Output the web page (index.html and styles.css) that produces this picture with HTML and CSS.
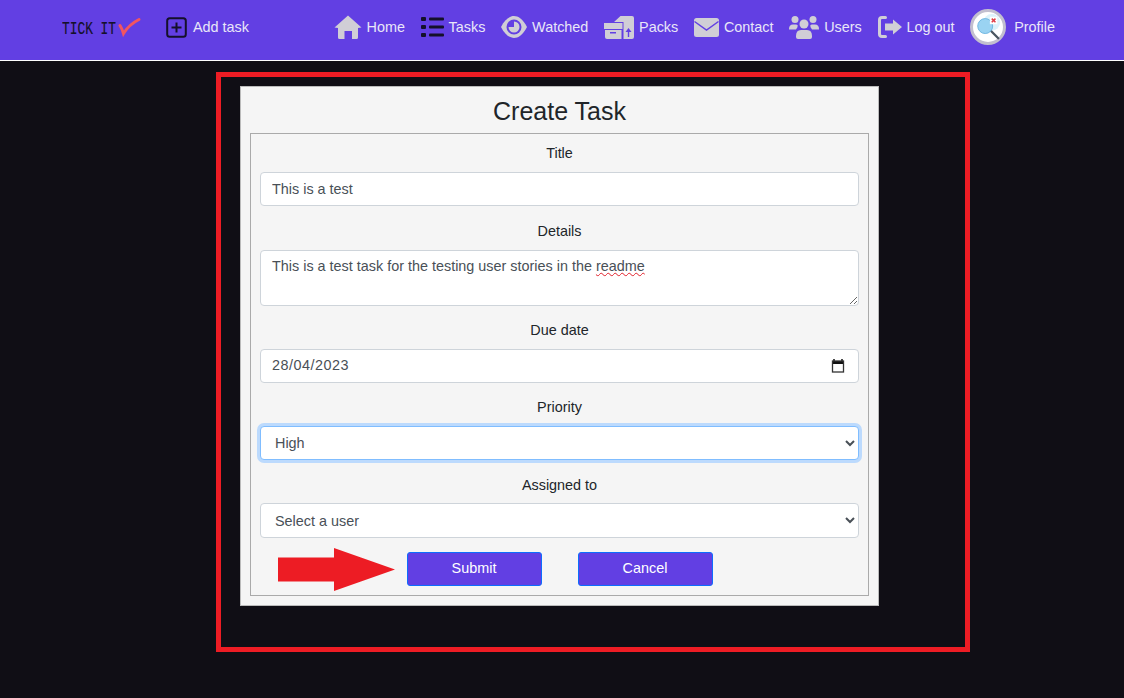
FILE: index.html
```html
<!DOCTYPE html>
<html lang="en">
<head>
    <meta charset="UTF-8">
    <meta name="viewport" content="width=device-width, initial-scale=1.0">
    <title>Create Task</title>
    <link rel="stylesheet" href="styles.css">
</head>
<body>

    <nav class="navbar">
        <a class="logo" href="#">
            <svg width="80" height="26" viewBox="0 0 80 26">
                <text x="0" y="20" class="logo-text" textLength="54" lengthAdjust="spacingAndGlyphs">TICK IT</text>
                <path d="M58 11.5 Q60 14.5 61.5 19.5 Q67 10.5 77 5.5" fill="none" stroke="#f25560" stroke-width="3" stroke-linecap="round"/>
            </svg>
        </a>
        <a class="nav-link add-task" href="#">
            <svg class="icon" width="21" height="21" viewBox="0 0 21 21">
                <rect x="1.2" y="1.2" width="18.6" height="18.6" rx="2.5" fill="none" stroke="#14102a" stroke-width="2"/>
                <path d="M10.5 5.5v10M5.5 10.5h10" stroke="#14102a" stroke-width="2"/>
            </svg>
            Add task
        </a>
        <div class="nav-links">
            <a class="nav-link" href="#">
                <svg class="icon" width="28" height="24" viewBox="0 0 28 24">
                    <path d="M14 0.5 L27.5 12.5 L24 13 V22.5 Q24 24 22.5 24 H18 V16 H10.5 V24 H5.5 Q4 24 4 22.5 V13 L0.5 12.5Z" fill="#d0ced6"/>
                </svg>
                Home
            </a>
            <a class="nav-link" href="#">
                <svg class="icon" width="23" height="20" viewBox="0 0 23 20" fill="#14102a">
                    <rect x="0" y="0" width="5" height="4" rx="1"/>
                    <rect x="0" y="8" width="5" height="4" rx="1"/>
                    <rect x="0" y="16" width="5" height="4" rx="1"/>
                    <rect x="8" y="0.5" width="15" height="3" rx="1"/>
                    <rect x="8" y="8.5" width="15" height="3" rx="1"/>
                    <rect x="8" y="16.5" width="15" height="3" rx="1"/>
                </svg>
                Tasks
            </a>
            <a class="nav-link" href="#">
                <svg class="icon" width="26" height="22" viewBox="0 0 26 22">
                    <path d="M0 11 C4 3 9 0 13 0 S22 3 26 11 C22 19 17 22 13 22 S4 19 0 11Z" fill="#d0ced6"/>
                    <circle cx="13" cy="11" r="7.5" fill="#623fe3"/>
                    <path d="M13 5.5 A5.5 5.5 0 1 1 7.5 11 L13 11Z" fill="#d0ced6"/>
                </svg>
                Watched
            </a>
            <a class="nav-link" href="#">
                <svg class="icon" width="30" height="23" viewBox="0 0 30 23">
                    <path d="M10 6 L16.5 0 H28 Q30 0 30 2 V21 Q30 23 28 23 H19.5 V6Z" fill="#d0ced6"/>
                    <rect x="0" y="7" width="18.5" height="6" fill="#d0ced6"/>
                    <path d="M1 14 H17.5 V23 H3 Q1 23 1 21Z" fill="#d0ced6"/>
                    <rect x="6" y="16" width="6" height="1.5" fill="#623fe3"/>
                    <path d="M24.5 12 L21.5 16 H23.8 V21 H25.2 V16 H27.5Z" fill="#623fe3"/>
                </svg>
                Packs
            </a>
            <a class="nav-link" href="#">
                <svg class="icon" width="25" height="19" viewBox="0 0 25 19">
                    <rect x="0" y="0" width="25" height="19" rx="2.5" fill="#d0ced6"/>
                    <path d="M0.5 3.5 L12.5 12 L24.5 3.5" fill="none" stroke="#623fe3" stroke-width="1.5"/>
                </svg>
                Contact
            </a>
            <a class="nav-link" href="#">
                <svg class="icon" width="30" height="24" viewBox="0 0 30 24" fill="#d0ced6">
                    <circle cx="6" cy="4.5" r="3.5"/>
                    <circle cx="24" cy="4.5" r="3.5"/>
                    <circle cx="15" cy="9" r="4.5"/>
                    <path d="M0 14 Q0 9.5 4 9.5 H7 Q8 9.5 8.7 10.2 Q9 12 7 14.5 H0Z"/>
                    <path d="M30 14 Q30 9.5 26 9.5 H23 Q22 9.5 21.3 10.2 Q21 12 23 14.5 H30Z"/>
                    <path d="M7 21 Q7 15 12 15 H18 Q23 15 23 21 V22 Q23 24 21 24 H9 Q7 24 7 22Z"/>
                </svg>
                Users
            </a>
            <a class="nav-link" href="#">
                <svg class="icon" width="24" height="22" viewBox="0 0 24 22">
                    <path d="M7.5 1.5 H4 Q1.5 1.5 1.5 4 V18 Q1.5 20.5 4 20.5 H7.5" fill="none" stroke="#d0ced6" stroke-width="3" stroke-linecap="round"/>
                    <path d="M15 3.5 L24 11 L15 18.5 V14.5 H7 V7.5 H15Z" fill="#d0ced6"/>
                </svg>
                Log out
            </a>
            <a class="nav-link profile" href="#">
                <span class="avatar">
                    <svg width="28" height="28" viewBox="0 0 30 30">
                        <circle cx="19" cy="10" r="9" fill="#dcf2fb"/>
                        <path d="M18 19 L26 27" stroke="#4a5560" stroke-width="2.5" stroke-linecap="round"/>
                        <circle cx="12" cy="14" r="8" fill="#9ad3f2"/>
                        <circle cx="12" cy="14" r="8" fill="none" stroke="#6bb4e0" stroke-width="1"/>
                        <rect x="17" y="4" width="8" height="8" fill="#fff"/>
                        <path d="M19 6 L23 10 M23 6 L19 10" stroke="#e0404a" stroke-width="1.6"/>
                    </svg>
                </span>
                Profile
            </a>
        </div>
    </nav>

    <main class="page">
        <div class="card">
            <h1 class="card-title">Create Task</h1>
            <form class="task-form">
                <div class="field">
                    <label for="title">Title</label>
                    <input class="control" type="text" id="title" value="This is a test">
                </div>
                <div class="field">
                    <label class="nudge" for="details">Details</label>
                    <div class="area-wrap">
                        <textarea class="control area" id="details" spellcheck="false">This is a test task for the testing user stories in the readme</textarea>
                        <div class="area-mirror">This is a test task for the testing user stories in the <span class="misspelt">readme</span></div>
                    </div>
                </div>
                <div class="field">
                    <label for="due">Due date</label>
                    <div class="date-wrap">
                        <input class="control date-input" type="text" id="due" value="28/04/2023">
                        <svg class="date-icon" width="14" height="14" viewBox="0 0 14 14">
                            <path d="M3 0v2M11 0v2" stroke="#111" stroke-width="1.5"/>
                            <rect x="1.5" y="2" width="11" height="3" fill="#111"/>
                            <rect x="1.5" y="2" width="11" height="11" fill="none" stroke="#333" stroke-width="1.3"/>
                        </svg>
                    </div>
                </div>
                <div class="field">
                    <label for="priority">Priority</label>
                    <select class="control focused" id="priority">
                        <option>High</option>
                        <option>Medium</option>
                        <option>Low</option>
                    </select>
                </div>
                <div class="field">
                    <label class="nudge" for="assigned">Assigned to</label>
                    <select class="control assigned" id="assigned">
                        <option>Select a user</option>
                    </select>
                </div>
                <div class="actions">
                    <button class="btn" type="submit">Submit</button>
                    <button class="btn" type="button">Cancel</button>
                </div>
            </form>
        </div>

        <div class="highlight-frame"></div>
        <svg class="highlight-arrow" width="117" height="43" viewBox="0 0 117 43">
            <path d="M0 9.5 H56 V0 L117 21.5 L56 43 V33.5 H0Z" fill="#ed1c24"/>
        </svg>
    </main>

</body>
</html>
```

FILE: styles.css
```css
html, body {
    height: 100%;
}
body {
    margin: 0;
    background-color: #100e15;
    font-family: "Liberation Sans", Arial, sans-serif;
    font-size: 14.4px;
    color: #212529;
    overflow: hidden;
}

/* navbar */
.navbar {
    display: flex;
    align-items: center;
    height: 60px;
    padding: 0 69px 0 62px;
    background-color: #623fe3;
    border-bottom: 1px solid #fff;
}
.logo {
    display: block;
    height: 26px;
    margin-bottom: 6px;
}
.logo-text {
    font-family: "Liberation Mono", monospace;
    font-size: 19px;
    fill: #14102a;
    stroke: #14102a;
    stroke-width: 0.2px;
}
.nav-link {
    display: flex;
    align-items: center;
    gap: 5px;
    color: #e9e6f8;
    text-decoration: none;
    white-space: nowrap;
}
.add-task {
    gap: 6px;
    margin: 0 0 6px 24px;
}
.nav-links {
    display: flex;
    align-items: center;
    gap: 15.7px;
    margin: 0 0 6px auto;
}
.profile {
    gap: 8px;
}
.avatar {
    display: flex;
    align-items: center;
    justify-content: center;
    width: 36px;
    height: 36px;
    box-sizing: border-box;
    border: 3px solid #c2bfcf;
    border-radius: 50%;
    background-color: #fff;
}

/* card */
.page {
    position: relative;
    padding-top: 25px;
}
.card {
    box-sizing: border-box;
    width: 639px;
    margin-left: 240px;
    padding: 0 9px 9px;
    background-color: #f5f5f5;
    border: 1px solid #bbb;
}
.card-title {
    margin: 0;
    height: 46px;
    line-height: 49px;
    font-size: 25px;
    font-weight: 400;
    text-align: center;
}
.task-form {
    display: flex;
    flex-direction: column;
    gap: 14.2px;
    padding: 9px;
    border: 1px solid #aaa;
}
.field {
    display: flex;
    flex-direction: column;
    gap: 8px;
}
.field label {
    line-height: 21px;
    text-align: center;
}
.field .nudge {
    padding-top: 0.4px;
    margin-bottom: -0.4px;
}
.control {
    box-sizing: border-box;
    width: 100%;
    height: 34px;
    padding: 6px 11px;
    background-color: #fff;
    border: 1px solid #ced4da;
    border-radius: 4px;
    font-family: inherit;
    font-size: 14.4px;
    color: #495057;
    outline: none;
}
.focused {
    border-color: #80bdff;
    box-shadow: 0 0 0 3px #bcdafd;
}
select.control {
    padding: 6px 10px;
}
select.assigned {
    height: 35px;
}
.area-wrap {
    position: relative;
    display: flex;
    margin-top: 0.4px;
}
.area {
    height: 56px;
    line-height: 21px;
    padding-top: 5px;
    resize: vertical;
}
.area-mirror {
    position: absolute;
    top: 1px;
    left: 1px;
    padding: 5px 11px;
    line-height: 21px;
    color: transparent;
    pointer-events: none;
}
.misspelt {
    text-decoration: underline wavy #e0202a 1px;
}
.date-wrap {
    position: relative;
    display: flex;
}
.date-input {
    padding: 5px 11px 7px;
    letter-spacing: 0.5px;
}
.date-icon {
    position: absolute;
    top: 10px;
    right: 14px;
}
.actions {
    display: flex;
    justify-content: center;
    gap: 36px;
}
.btn {
    width: 135px;
    height: 34px;
    padding: 0 0 2px;
    background-color: #623fe3;
    border: 1px solid #0d6efd;
    border-radius: 3px;
    font-family: inherit;
    font-size: 14.4px;
    color: #fff;
}

/* red annotation drawn over the screenshot */
.highlight-frame {
    position: absolute;
    top: 11px;
    left: 216px;
    width: 754px;
    height: 580px;
    box-sizing: border-box;
    border: 5px solid #ed1c24;
    pointer-events: none;
}
.highlight-arrow {
    position: absolute;
    top: 487px;
    left: 278px;
}
```
